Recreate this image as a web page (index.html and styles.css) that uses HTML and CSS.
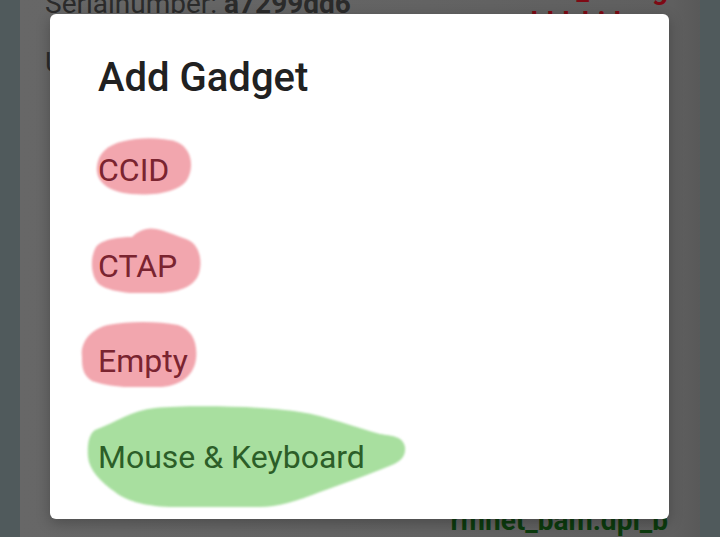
FILE: index.html
```html
<!DOCTYPE html>
<html lang="en">
<head>
<meta charset="utf-8">
<title>Add Gadget</title>
<link rel="stylesheet" href="styles.css">
</head>
<body>
<div class="page">
  <div class="card">
    <div class="row row-top">
      <div class="serial">Serialnumber: <b>a7299dd6</b></div>
      <div class="status-red">
        <div>usb_config</div>
        <div>ldd_hid</div>
      </div>
    </div>
    <div class="row row-second">USB</div>
    <div class="spacer"></div>
    <div class="row row-bottom">rmnet_bam.dpl_b</div>

    <div class="dialog" role="dialog">
      <h1 class="title">Add Gadget</h1>
      <ul class="items">
        <li class="item pink">
          <svg class="blob blob-ccid" viewBox="0 0 98 60" width="98" height="60"><path d="M10,14 C22,2 60,-1 82,6 C96,12 100,30 92,44 C84,56 60,60 36,58 C14,56 0,46 2,30 C3,22 6,18 10,14Z"/></svg>
          <span class="label">CCID</span>
        </li>
        <li class="item pink">
          <svg class="blob blob-ctap" viewBox="0 0 112 66" width="112" height="66"><path d="M6,20 C12,12 30,10 42,10 C48,4 56,0 66,2 C76,4 84,8 96,12 C108,16 112,30 110,42 C108,56 96,64 72,66 C50,68 22,66 10,58 C0,50 0,30 6,20Z"/></svg>
          <span class="label">CTAP</span>
        </li>
        <li class="item pink">
          <svg class="blob blob-empty" viewBox="0 0 120 66" width="120" height="66"><path d="M4,36 C2,22 12,8 30,4 C50,0 80,0 100,4 C114,8 120,22 118,38 C116,54 104,64 84,66 C60,68 30,66 14,60 C4,54 4,44 4,36Z"/></svg>
          <span class="label">Empty</span>
        </li>
        <li class="item green">
          <svg class="blob blob-mouse" viewBox="0 0 320 104" width="320" height="104"><path d="M8,26 C30,18 45,6 68,4 C100,1 180,2 213,8 C240,12 270,24 293,30 C305,32 316,32 318,43 C319,52 314,58 300,63 C283,70 255,80 233,88 C210,97 190,103 173,103 L83,103 C55,102 38,96 28,88 C14,78 2,66 1,53 C0,40 2,30 8,26Z"/></svg>
          <span class="label">Mouse &amp; Keyboard</span>
        </li>
      </ul>
    </div>
  </div>
</div>
</body>
</html>
```

FILE: styles.css
```css
* { box-sizing: border-box; }

html, body {
  margin: 0;
  padding: 0;
  width: 720px;
  height: 537px;
  overflow: hidden;
  background: #505a5c;
  font-family: Roboto, "Noto Sans", sans-serif;
}

.page {
  width: 720px;
  height: 537px;
  display: flex;
  padding: 0 20px;
}

.card {
  flex: 1;
  position: relative;
  display: flex;
  flex-direction: column;
  padding: 0 20px 0 25px;
  background: linear-gradient(to right, #676767 0%, #636363 60%, #5f5f5f 96%, #595959 100%);
  overflow: hidden;
}

.row {
  font-size: 28px;
  line-height: 48px;
  color: #2b2b2b;
  white-space: nowrap;
}

.row-top {
  margin-top: -20px;
  display: flex;
  justify-content: space-between;
  align-items: flex-start;
}

.serial b { font-weight: 700; }

.status-red {
  color: #7e0a14;
  font-weight: 700;
  text-align: left;
  line-height: 33px;
  margin-top: -7px;
  margin-right: 12px;
}

.spacer { flex: 1; }

.row-bottom {
  align-self: flex-end;
  color: #0c3b0e;
  font-weight: 700;
  margin-bottom: -8px;
  margin-right: 12px;
}

/* Dialog */
.dialog {
  position: absolute;
  left: 30px;
  top: 14px;
  width: 619px;
  height: 505px;
  background: #ffffff;
  border-radius: 6px;
  padding: 44px 0 0 48px;
  box-shadow: 0 4px 14px rgba(0, 0, 0, 0.25);
}

.title {
  margin: 0 0 24px 0;
  font-size: 40px;
  line-height: 40px;
  font-weight: 500;
  color: #212121;
}

.items {
  list-style: none;
  margin: 0;
  padding: 0;
}

.item {
  position: relative;
  height: 95.5px;
  font-size: 32px;
  line-height: 96px;
}

.label {
  position: relative;
  z-index: 1;
}

.pink .label { color: #7a2430; }
.green .label { color: #2c5e28; }

.blob {
  position: absolute;
  z-index: 0;
  filter: blur(1.2px);
}
.pink .blob path { fill: #f2a6ae; }
.green .blob path { fill: #a8df9f; }

.blob-ccid { left: -3px; top: 14px; }
.blob-ctap { left: -8px; top: 9px; }
.blob-empty { left: -20px; top: 8px; }
.blob-mouse { left: -11px; top: -5px; }
```
